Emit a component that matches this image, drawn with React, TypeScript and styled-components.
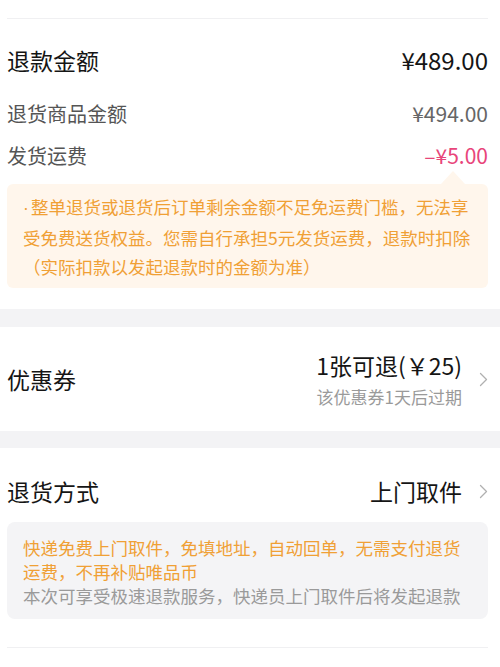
import styled, { createGlobalStyle } from "styled-components";

const GlobalStyle = createGlobalStyle`
  body {
    margin: 0;
    background: #ffffff;
    font-family: "Noto Sans CJK SC", "Noto Sans", sans-serif;
    color: #222222;
  }
`;

const Page = styled.div`
  width: 500px;
  min-height: 667px;
  background: #ffffff;
`;

const Section = styled.section<{ $top?: number; $bottom?: number }>`
  background: #ffffff;
  padding: ${(p) => p.$top ?? 0}px 12px ${(p) => p.$bottom ?? 0}px 7px;
`;

const Divider = styled.div<{ $gap?: number }>`
  height: 1px;
  margin-top: ${(p) => p.$gap ?? 0}px;
  background: #f0f0f2;
`;

const Band = styled.div<{ $h: number }>`
  height: ${(p) => p.$h}px;
  background: #f3f3f5;
`;

const TitleRow = styled.div`
  display: flex;
  justify-content: space-between;
  align-items: center;
  height: 30px;
  margin-top: 26px;
  font-size: 23px;
  line-height: 30px;
  color: #151515;
`;

const Amount = styled.span`
  font-size: 24px;
`;

const DetailList = styled.div`
  display: flex;
  flex-direction: column;
  gap: 14px;
  margin-top: 24px;
`;

const DetailRow = styled.div`
  display: flex;
  justify-content: space-between;
  align-items: center;
  height: 28px;
  font-size: 20px;
  color: #555555;
`;

const Value = styled.span<{ $red?: boolean }>`
  font-size: 21px;
  color: ${(p) => (p.$red ? "#e8457a" : "#666666")};
`;

const Notice = styled.div`
  position: relative;
  margin-top: 15px;
  padding: 8px 10px 7px 16px;
  background: #fff6ec;
  border-radius: 6px;
  font-size: 17.5px;
  line-height: 29px;
  color: #f0a035;

  &::before {
    content: "";
    position: absolute;
    top: -13px;
    right: 23px;
    border-left: 12px solid transparent;
    border-right: 12px solid transparent;
    border-bottom: 13px solid #fff6ec;
  }
`;

const Line = styled.div<{ $muted?: boolean }>`
  white-space: nowrap;
  color: ${(p) => (p.$muted ? "#9a9a9a" : "#f0a035")};
`;

const Dot = styled.span`
  display: inline-block;
  width: 8px;
  font-family: "Liberation Sans", sans-serif;
`;

const NavRow = styled.div<{ $h: number }>`
  display: flex;
  align-items: center;
  justify-content: space-between;
  height: ${(p) => p.$h}px;
`;

const Label = styled.span`
  font-size: 23px;
  color: #151515;
`;

const RightGroup = styled.div`
  display: flex;
  align-items: center;
  gap: 17px;
`;

const Stack = styled.div`
  display: flex;
  flex-direction: column;
  align-items: flex-end;
  gap: 6px;
`;

const Main = styled.span`
  font-size: 23px;
  line-height: 30px;
  color: #151515;
`;

const Sub = styled.span`
  font-size: 17px;
  line-height: 22px;
  color: #9a9a9a;
`;

const InfoBox = styled.div`
  margin-top: 16px;
  padding: 14px 10px 11px 16px;
  background: #f4f4f6;
  border-radius: 8px;
  font-size: 17.5px;
  line-height: 24px;
`;

const Chevron = () => (
  <svg width="9" height="15" viewBox="0 0 9 15" fill="none">
    <path d="M1.5 1.5l6 6-6 6" stroke="#b0b0b0" strokeWidth="1.3" strokeLinecap="round" strokeLinejoin="round" />
  </svg>
);

export default function App() {
  return (
    <Page>
      <GlobalStyle />
      <Section $top={18} $bottom={21}>
        <Divider />
        <TitleRow>
          <span>退款金额</span>
          <Amount>¥489.00</Amount>
        </TitleRow>
        <DetailList>
          <DetailRow>
            <span>退货商品金额</span>
            <Value>¥494.00</Value>
          </DetailRow>
          <DetailRow>
            <span>发货运费</span>
            <Value $red>–¥5.00</Value>
          </DetailRow>
        </DetailList>
        <Notice>
          <Line>
            <Dot>·</Dot>整单退货或退货后订单剩余金额不足免运费门槛，无法享
          </Line>
          <Line>受免费送货权益。您需自行承担5元发货运费，退款时扣除</Line>
          <Line>（实际扣款以发起退款时的金额为准）</Line>
        </Notice>
      </Section>
      <Band $h={18} />
      <Section>
        <NavRow $h={104}>
          <Label>优惠券</Label>
          <RightGroup>
            <Stack>
              <Main>1张可退(￥25)</Main>
              <Sub>该优惠券1天后过期</Sub>
            </Stack>
            <Chevron />
          </RightGroup>
        </NavRow>
      </Section>
      <Band $h={17} />
      <Section $top={28} $bottom={20}>
        <NavRow $h={30}>
          <Label>退货方式</Label>
          <RightGroup>
            <Main>上门取件</Main>
            <Chevron />
          </RightGroup>
        </NavRow>
        <InfoBox>
          <Line>快递免费上门取件，免填地址，自动回单，无需支付退货</Line>
          <Line>运费，不再补贴唯品币</Line>
          <Line $muted>本次可享受极速退款服务，快递员上门取件后将发起退款</Line>
        </InfoBox>
        <Divider $gap={28} />
      </Section>
    </Page>
  );
}
